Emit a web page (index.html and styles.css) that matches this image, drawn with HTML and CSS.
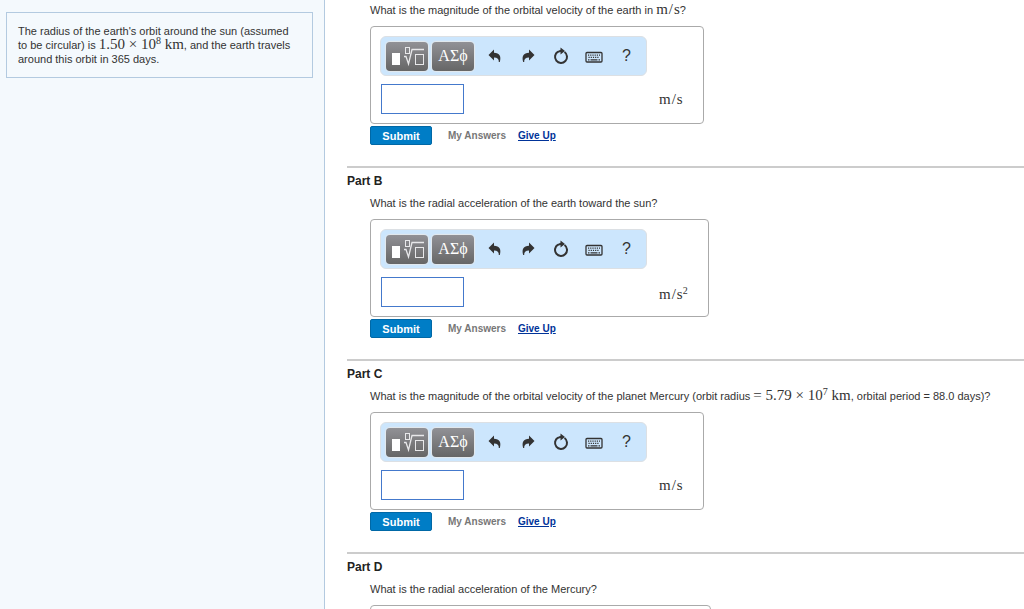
FILE: index.html
```html
<!DOCTYPE html>
<html lang="en">
<head>
    <meta charset="UTF-8">
    <meta name="viewport" content="width=device-width, initial-scale=1.0">
    <title>Orbital velocity and acceleration</title>
    <link rel="stylesheet" href="styles.css">
</head>
<body>
    <svg class="sprites" aria-hidden="true">
        <symbol id="templates" viewBox="0 0 42 28">
            <rect x="6" y="11" width="8" height="12" fill="#fff"/>
            <g fill="none" stroke="#e8e8ea">
                <rect x="19.500" y="5.500" width="4" height="6"/>
                <path d="M18 14.500h2l2.500 7.500L26 7.500h12" stroke-width="1.300"/>
                <rect x="29.500" y="12.500" width="8" height="10"/>
            </g>
        </symbol>
        <symbol id="undo" viewBox="0 0 14 14">
            <path d="M6 .5v3.200c5.500.3 7.500 3.300 5.800 9.300h-1C11 10 9.500 8.500 6 8.500v3L.5 6z"/>
        </symbol>
        <symbol id="redo" viewBox="0 0 14 14">
            <path d="M8 .5v3.200C2.500 4 .5 7 2.200 13h1C3 10 4.500 8.500 8 8.500v3L13.500 6z"/>
        </symbol>
        <symbol id="reset" viewBox="0 0 16 18">
            <path d="M11.500 5a6 6 0 1 1-6.500-.3" fill="none" stroke="#333" stroke-width="2"/>
            <path d="M7.500.5l4.500 3.500-4.500 3.500V5L5 5.700l-.8-1.500 3.300-1.500z"/>
        </symbol>
        <symbol id="keyboard" viewBox="0 0 18 14">
            <rect x="1" y="3.500" width="16" height="9.500" rx="1" fill="none" stroke="#333" stroke-width="1.300"/>
            <path d="M3 6.200h12M3.500 8.400h11" stroke="#333" stroke-width="1.300" stroke-dasharray="1.200 1"/>
            <path d="M3 10.800h1.500M5.500 10.800h7M13.500 10.800h1.500" stroke="#333" stroke-width="1.200"/>
        </symbol>
    </svg>

    <aside class="sidebar">
        <p class="intro">The radius of the earth's orbit around the sun (assumed to be circular) is <span class="math">1.50 &times; 10<sup>8</sup> km</span>, and the earth travels around this orbit in 365 days.</p>
    </aside>

    <main class="content">
        <section class="part first">
            <label class="question" for="answer-a">What is the magnitude of the orbital velocity of the earth in <span class="math">m<span class="slash">/</span>s</span>?</label>
            <div class="answer-box">
                <div class="toolbar">
                    <button class="palette" aria-label="Templates"><svg width="42" height="28"><use href="#templates"/></svg></button>
                    <button class="palette greek">ΑΣϕ</button>
                    <button class="tool" aria-label="Undo"><svg width="14" height="14"><use href="#undo"/></svg></button>
                    <button class="tool" aria-label="Redo"><svg width="14" height="14"><use href="#redo"/></svg></button>
                    <button class="tool" aria-label="Reset"><svg width="16" height="18"><use href="#reset"/></svg></button>
                    <button class="tool" aria-label="Keyboard shortcuts"><svg width="18" height="14"><use href="#keyboard"/></svg></button>
                    <button class="tool">?</button>
                </div>
                <input class="answer" id="answer-a" type="text">
                <span class="unit math">m<span class="slash">/</span>s</span>
            </div>
            <div class="actions">
                <button class="submit">Submit</button>
                <span class="my-answers">My Answers</span>
                <a href="#">Give Up</a>
            </div>
        </section>

        <section class="part">
            <h2>Part B</h2>
            <label class="question" for="answer-b">What is the radial acceleration of the earth toward the sun?</label>
            <div class="answer-box">
                <div class="toolbar">
                    <button class="palette" aria-label="Templates"><svg width="42" height="28"><use href="#templates"/></svg></button>
                    <button class="palette greek">ΑΣϕ</button>
                    <button class="tool" aria-label="Undo"><svg width="14" height="14"><use href="#undo"/></svg></button>
                    <button class="tool" aria-label="Redo"><svg width="14" height="14"><use href="#redo"/></svg></button>
                    <button class="tool" aria-label="Reset"><svg width="16" height="18"><use href="#reset"/></svg></button>
                    <button class="tool" aria-label="Keyboard shortcuts"><svg width="18" height="14"><use href="#keyboard"/></svg></button>
                    <button class="tool">?</button>
                </div>
                <input class="answer" id="answer-b" type="text">
                <span class="unit math">m<span class="slash">/</span>s<sup>2</sup></span>
            </div>
            <div class="actions">
                <button class="submit">Submit</button>
                <span class="my-answers">My Answers</span>
                <a href="#">Give Up</a>
            </div>
        </section>

        <section class="part">
            <h2>Part C</h2>
            <label class="question" for="answer-c">What is the magnitude of the orbital velocity of the planet Mercury (orbit radius <span class="math">= 5.79 &times; 10<sup>7</sup> km</span>, orbital period = 88.0 days)?</label>
            <div class="answer-box">
                <div class="toolbar">
                    <button class="palette" aria-label="Templates"><svg width="42" height="28"><use href="#templates"/></svg></button>
                    <button class="palette greek">ΑΣϕ</button>
                    <button class="tool" aria-label="Undo"><svg width="14" height="14"><use href="#undo"/></svg></button>
                    <button class="tool" aria-label="Redo"><svg width="14" height="14"><use href="#redo"/></svg></button>
                    <button class="tool" aria-label="Reset"><svg width="16" height="18"><use href="#reset"/></svg></button>
                    <button class="tool" aria-label="Keyboard shortcuts"><svg width="18" height="14"><use href="#keyboard"/></svg></button>
                    <button class="tool">?</button>
                </div>
                <input class="answer" id="answer-c" type="text">
                <span class="unit math">m<span class="slash">/</span>s</span>
            </div>
            <div class="actions">
                <button class="submit">Submit</button>
                <span class="my-answers">My Answers</span>
                <a href="#">Give Up</a>
            </div>
        </section>

        <section class="part">
            <h2>Part D</h2>
            <label class="question" for="answer-d">What is the radial acceleration of the Mercury?</label>
            <div class="answer-box wide">
                <div class="toolbar"></div>
                <input class="answer" id="answer-d" type="text">
            </div>
        </section>
    </main>
</body>
</html>
```

FILE: styles.css
```css
* {
    box-sizing: border-box;
}
body {
    margin: 0;
    height: 100vh;
    display: flex;
    overflow: hidden;
    background: white;
    color: #333;
    font-family: "Liberation Sans", Arial, sans-serif;
    font-size: 11px;
}
button {
    font-family: inherit;
    padding: 0;
    border: none;
    cursor: pointer;
}
svg {
    display: block;
    fill: #333;
}
.sprites {
    display: none;
}

.sidebar {
    flex: 0 0 325px;
    padding: 12px 11px 12px 6px;
    background: #f4f9fd;
    border-right: 1px solid #b3cae0;
}
.intro {
    margin: 0;
    padding: 11px 18px 11px 11px;
    border: 1px solid #b3cae0;
    line-height: 14px;
}
.math {
    font-family: "Liberation Serif", "Times New Roman", serif;
    font-size: 15px;
    line-height: 1px;
    white-space: nowrap;
}
.math sup {
    font-size: 10px;
    line-height: 1px;
    vertical-align: 5px;
}
.slash {
    margin: 0 1px;
}

.content {
    flex: 1;
    min-width: 0;
    padding-left: 22px;
}
.part {
    padding: 6px 0 21px 23px;
    border-top: 2px solid #ccc;
}
.part.first {
    padding-top: 2px;
    border-top: none;
}
.part h2 {
    margin: 0 0 7px -23px;
    font-size: 12px;
    line-height: 14px;
    color: #222;
}
.question {
    display: block;
    margin-bottom: 8px;
    line-height: 16px;
}
.answer-box {
    display: inline-grid;
    grid-template-columns: 279px auto;
    row-gap: 8px;
    align-items: center;
    padding: 9px 20px 9px 9px;
    border: 1px solid #aaa;
    border-radius: 4px;
    vertical-align: top;
}
.answer-box.wide {
    width: 341px;
}
.toolbar {
    grid-column: 1 / 3;
    display: flex;
    align-items: center;
    width: 267px;
    height: 40px;
    padding-left: 5px;
    background: #cce6fd;
    border: 1px solid #dce0e4;
    border-radius: 6px;
}
.palette {
    width: 42px;
    height: 29px;
    margin-right: 4px;
    background: linear-gradient(#919196, #666);
    border-radius: 4px;
    box-shadow: 0 0 1px 1px #e4e8ec;
    color: white;
}
.greek {
    font-family: "Liberation Serif", serif;
    font-size: 16px;
    line-height: 28px;
}
.tool {
    display: flex;
    align-items: center;
    justify-content: center;
    width: 33px;
    height: 28px;
    background: none;
    color: #333;
    font-size: 16px;
}
.answer {
    width: 83px;
    height: 30px;
    margin-left: 1px;
    padding: 0 4px;
    border: 1px solid #4479cc;
    font-size: 14px;
}

.actions {
    display: flex;
    align-items: center;
    margin-top: 2px;
    font-size: 10px;
    font-weight: bold;
}
.submit {
    width: 62px;
    height: 19px;
    margin-right: 16px;
    background: #007dc6;
    border: 1px solid #0068a6;
    border-radius: 2px;
    color: white;
    font-size: 11px;
    font-weight: bold;
}
.my-answers {
    margin-right: 12px;
    color: #777;
}
.actions a {
    color: #003399;
}
```
